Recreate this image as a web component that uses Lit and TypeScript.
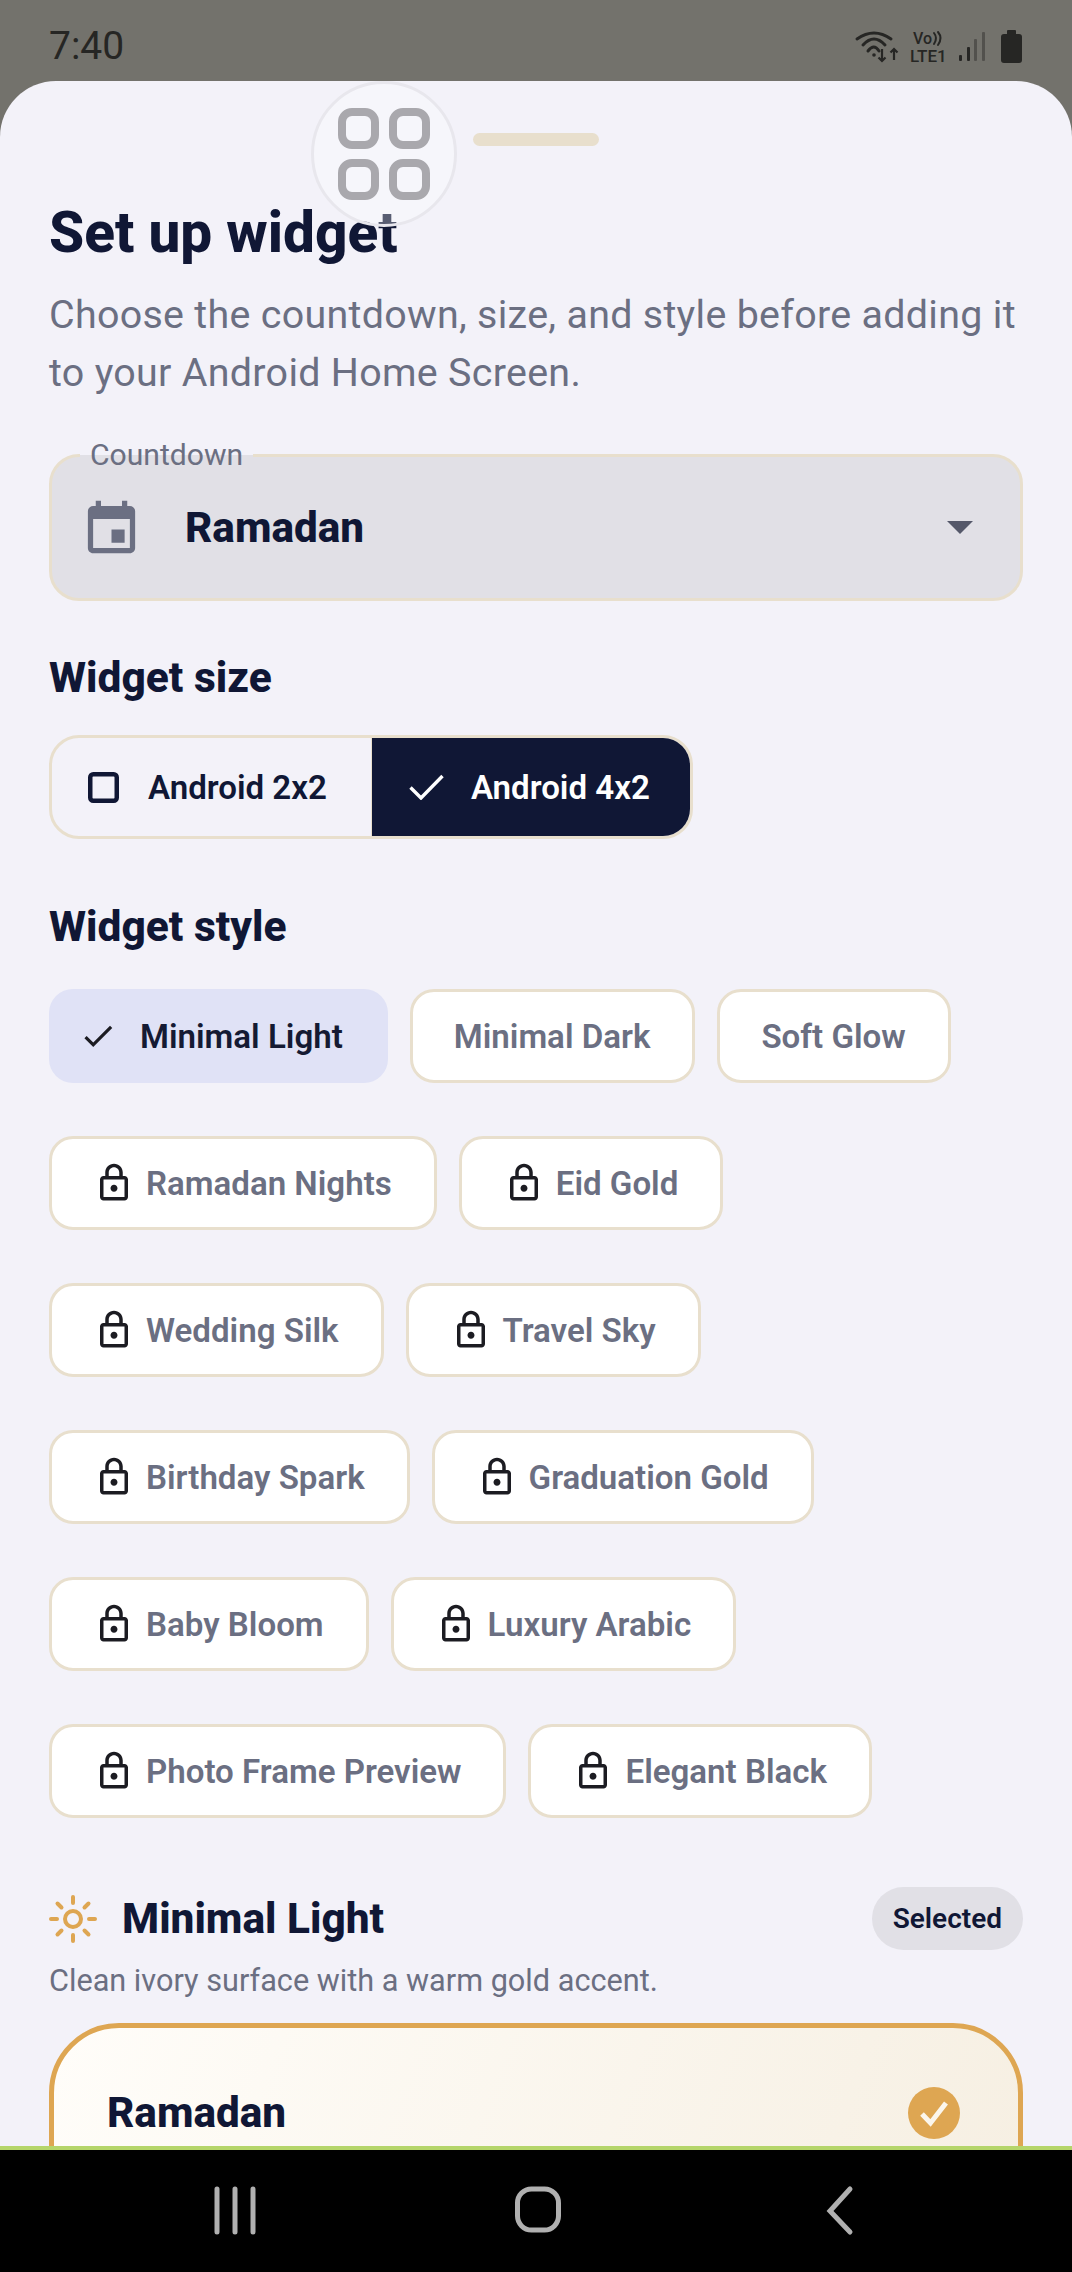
import { LitElement, html, css, svg } from 'lit';
import { customElement } from 'lit/decorators.js';

const lockIcon = svg`<path d="M18 8h-1V6c0-2.76-2.24-5-5-5S7 3.24 7 6v2H6c-1.1 0-2 .9-2 2v10c0 1.1.9 2 2 2h12c1.1 0 2-.9 2-2V10c0-1.1-.9-2-2-2zM9 6c0-1.66 1.34-3 3-3s3 1.34 3 3v2H9V6zm9 14H6V10h12v10zm-6-3c1.1 0 2-.9 2-2s-.9-2-2-2-2 .9-2 2 .9 2 2 2z"/>`;
const checkIcon = svg`<path d="M9 16.17L4.83 12l-1.41 1.41L9 19 21 7l-1.41-1.41z"/>`;

const rows: { label: string; locked?: boolean; selected?: boolean }[] = [
  { label: 'Minimal Light', selected: true },
  { label: 'Minimal Dark' },
  { label: 'Soft Glow' },
  { label: 'Ramadan Nights', locked: true },
  { label: 'Eid Gold', locked: true },
  { label: 'Wedding Silk', locked: true },
  { label: 'Travel Sky', locked: true },
  { label: 'Birthday Spark', locked: true },
  { label: 'Graduation Gold', locked: true },
  { label: 'Baby Bloom', locked: true },
  { label: 'Luxury Arabic', locked: true },
  { label: 'Photo Frame Preview', locked: true },
  { label: 'Elegant Black', locked: true },
];

@customElement('app-root')
export class AppRoot extends LitElement {
  static styles = css`
    :host {
      display: flex;
      flex-direction: column;
      height: 2272px;
      overflow: hidden;
      background: #73726c;
      font-family: Roboto, "Liberation Sans", sans-serif;
      color: #101735;
    }
    .status {
      flex: none;
      height: 81px;
      display: flex;
      justify-content: space-between;
      align-items: flex-start;
      padding-left: 49px;
      padding-right: 22px;
      box-sizing: border-box;
      background: #73726c;
      color: #262624;
    }
    .time {
      font-size: 39px;
      line-height: 44px;
      margin-top: 24px;
      font-weight: 400;
    }
    .status svg {
      display: block;
      margin-top: 10px;
    }
    .sheet {
      flex: 1;
      min-height: 0;
      position: relative;
      overflow: hidden;
      background: #f3f2f9;
      border-radius: 56px 56px 0 0;
      padding: 52px 49px 0;
    }
    .handle {
      width: 126px;
      height: 13px;
      border-radius: 7px;
      background: #e8dfcd;
      margin: 0 auto;
    }
    .float {
      position: absolute;
      left: 311px;
      top: 0;
      width: 146px;
      height: 146px;
      box-sizing: border-box;
      border-radius: 50%;
      border: 3px solid #e8e7ed;
      background: rgba(255, 255, 255, 0.3);
      display: flex;
      align-items: center;
      justify-content: center;
    }
    h1 {
      margin: 54px 0 0;
      font-size: 56.7px;
      line-height: 66px;
      font-weight: 800;
    }
    .sub {
      margin: 20px 0 0;
      font-size: 39.4px;
      line-height: 58px;
      letter-spacing: 0.3px;
      color: #6b6f82;
    }
    .field {
      position: relative;
      margin-top: 52px;
      height: 147px;
      box-sizing: border-box;
      border: 3px solid #e8dfcd;
      border-radius: 30px;
      background: #e1e0e6;
      display: flex;
      align-items: center;
      padding: 0 47px 0 28px;
    }
    .field-label {
      position: absolute;
      left: 28px;
      top: -2px;
      transform: translateY(-50%);
      padding: 0 10px;
      font-size: 30.1px;
      line-height: 34px;
      color: #6b6f82;
      background: linear-gradient(#f3f2f9 50%, #e1e0e6 50%);
    }
    .field-icon {
      flex: none;
      fill: #6b6f82;
      margin-top: 4px;
    }
    .field-value {
      flex: 1;
      margin-left: 42px;
      font-size: 42.3px;
      font-weight: 800;
    }
    .caret {
      width: 0;
      height: 0;
      border-left: 13px solid transparent;
      border-right: 13px solid transparent;
      border-top: 13px solid #55586a;
    }
    h2 {
      margin: 0;
      font-size: 42.5px;
      line-height: 50px;
      font-weight: 800;
    }
    .size-title {
      margin-top: 52px;
    }
    .segments {
      margin-top: 32px;
      display: inline-flex;
      height: 104px;
      box-sizing: border-box;
      border: 3px solid #e8dfcd;
      border-radius: 30px;
      overflow: hidden;
      font-size: 33.1px;
      font-weight: 600;
    }
    .seg {
      display: flex;
      align-items: center;
    }
    .seg-one {
      padding: 0 44px 0 36px;
      gap: 29px;
      border-right: 1px solid #e8dfcd;
    }
    .seg-two {
      padding: 0 40px 0 37px;
      gap: 27px;
      background: #101735;
      color: #fff;
    }
    .style-title {
      margin-top: 63px;
    }
    .chips {
      margin-top: 37px;
      display: flex;
      flex-wrap: wrap;
      gap: 53px 22px;
    }
    .chip {
      display: flex;
      align-items: center;
      height: 94px;
      box-sizing: border-box;
      padding: 0 42px 0 41px;
      border: 3px solid #e8dfcd;
      border-radius: 24px;
      background: #fff;
      font-size: 33.1px;
      font-weight: 600;
      color: #6b6f82;
    }
    .chip svg {
      flex: none;
      margin-right: 11px;
      fill: #1c1c22;
    }
    .chip.on {
      border: none;
      background: #e0e2f6;
      color: #151a33;
      padding: 0 45px 0 30px;
    }
    .chip.on svg {
      margin-right: 23px;
    }
    .head {
      margin-top: 69px;
      display: flex;
      align-items: center;
    }
    .head-name {
      flex: 1;
      margin-left: 25px;
      font-size: 42.4px;
      font-weight: 800;
    }
    .pill {
      height: 63px;
      padding: 0 21px;
      display: flex;
      align-items: center;
      border-radius: 32px;
      background: #e1e0e6;
      font-size: 28px;
      font-weight: 600;
    }
    .desc {
      margin: 11px 0 0;
      font-size: 30.66px;
      line-height: 40px;
      color: #6b6f82;
    }
    .card {
      margin-top: 22px;
      height: 240px;
      box-sizing: border-box;
      border: 5px solid #dea652;
      border-radius: 70px;
      background: linear-gradient(110deg, #fffdf9, #f6efe2);
      padding: 53px 58px 0 53px;
      display: flex;
      justify-content: space-between;
    }
    .card-name {
      font-size: 42.3px;
      line-height: 64px;
      font-weight: 800;
    }
    .card-check {
      margin-top: 6px;
    }
    .nav {
      flex: none;
      height: 126px;
      box-sizing: border-box;
      border-top: 4px solid #b5d56a;
      background: #000;
    }
    .nav svg {
      display: block;
    }
  `;

  render() {
    return html`
      <div class="status">
        <div class="time">7:40</div>
        <svg width="230" height="70" viewBox="0 0 230 70" fill="none" stroke="#262624" stroke-linecap="round">
          <g stroke-width="3">
            <path d="M37 29Q54 17 71 29"/>
            <path d="M43 35Q54 23 65 35"/>
            <path d="M48 41Q54 33 59 41"/>
          </g>
          <circle cx="54" cy="45" r="1.8" fill="#262624" stroke="none"/>
          <g stroke-width="2.2" stroke-linecap="butt">
            <path d="M62 39V51M58.5 47.5L62 51L65.5 47.5"/>
            <path d="M74 50V39M70.5 42.5L74 39L77.5 42.5"/>
          </g>
          <text x="93" y="34" font-size="16" font-weight="500" fill="#262624" stroke="none">Vo</text>
          <path d="M114 23Q118 28 114 34M118 22Q123 28 118 35" stroke-width="2"/>
          <text x="90" y="52" font-size="17" font-weight="500" fill="#262624" stroke="none">LTE1</text>
          <g stroke="none" fill="#262624">
            <rect x="139" y="45" width="3" height="6" rx="1"/>
            <rect x="147" y="37" width="3" height="14" rx="1"/>
            <rect x="154" y="29" width="3" height="22" rx="1" fill="#52514d"/>
            <rect x="162" y="22" width="3" height="29" rx="1" fill="#52514d"/>
            <rect x="181" y="24" width="21" height="29" rx="3"/>
            <rect x="187" y="20" width="9" height="6" rx="1"/>
          </g>
        </svg>
      </div>
      <div class="sheet">
        <div class="handle"></div>
        <h1>Set up widget</h1>
        <p class="sub">Choose the countdown, size, and style before adding it to your Android Home Screen.</p>
        <div class="field">
          <span class="field-label">Countdown</span>
          <svg class="field-icon" width="63" height="63" viewBox="0 0 24 24">
            <path d="M17 12h-5v5h5v-5zM16 1v2H8V1H6v2H5c-1.11 0-1.99.9-1.99 2L3 19c0 1.1.89 2 2 2h14c1.1 0 2-.9 2-2V5c0-1.1-.9-2-2-2h-1V1h-2zm3 18H5V8h14v11z"/>
          </svg>
          <span class="field-value">Ramadan</span>
          <span class="caret"></span>
        </div>
        <h2 class="size-title">Widget size</h2>
        <div class="segments">
          <div class="seg seg-one">
            <svg width="31" height="31" viewBox="0 0 31 31" fill="none" stroke="#101735" stroke-width="4.5">
              <rect x="2.25" y="2.25" width="26.5" height="26.5" rx="3"/>
            </svg>
            Android 2x2
          </div>
          <div class="seg seg-two">
            <svg width="35" height="26" viewBox="0 0 35 26" fill="none" stroke="#fff" stroke-width="3.4">
              <path d="M1.5 13.5L12 24L33.5 2"/>
            </svg>
            Android 4x2
          </div>
        </div>
        <h2 class="style-title">Widget style</h2>
        <div class="chips">
          ${rows.map(
            (r) => html`
              <div class="chip ${r.selected ? 'on' : ''}">
                ${r.selected
                  ? html`<svg width="38" height="38" viewBox="0 0 24 24">${checkIcon}</svg>`
                  : r.locked
                    ? html`<svg width="42" height="42" viewBox="0 0 24 24">${lockIcon}</svg>`
                    : ''}
                ${r.label}
              </div>
            `,
          )}
        </div>
        <div class="head">
          <svg width="48" height="48" viewBox="0 0 48 48" fill="none" stroke="#dea652" stroke-width="4" stroke-linecap="round">
            <circle cx="24" cy="24" r="8"/>
            <path d="M24 2V8M24 40V46M2 24H8M40 24H46M8.5 8.5L12.5 12.5M35.5 35.5L39.5 39.5M8.5 39.5L12.5 35.5M35.5 12.5L39.5 8.5"/>
          </svg>
          <span class="head-name">Minimal Light</span>
          <span class="pill">Selected</span>
        </div>
        <p class="desc">Clean ivory surface with a warm gold accent.</p>
        <div class="card">
          <span class="card-name">Ramadan</span>
          <svg class="card-check" width="52" height="52" viewBox="0 0 52 52">
            <circle cx="26" cy="26" r="26" fill="#dea652"/>
            <path d="M14 27L22.5 36L38 16" fill="none" stroke="#fbf6ec" stroke-width="5"/>
          </svg>
        </div>
        <div class="float">
          <svg width="92" height="92" viewBox="0 0 92 92" fill="none" stroke="#a9a8ad" stroke-width="8">
            <rect x="4" y="4" width="33" height="33" rx="10"/>
            <rect x="55" y="4" width="33" height="33" rx="10"/>
            <rect x="4" y="55" width="33" height="33" rx="10"/>
            <rect x="55" y="55" width="33" height="33" rx="10"/>
          </svg>
        </div>
      </div>
      <div class="nav">
        <svg width="1072" height="122" viewBox="0 0 1072 122" fill="none" stroke="#b0b0b0" stroke-width="5" stroke-linecap="round">
          <path d="M217 39V82M235 39V82M253 39V82"/>
          <rect x="517.5" y="39" width="41" height="41" rx="14"/>
          <path d="M850 39L830 61L850 82"/>
        </svg>
      </div>
    `;
  }
}
